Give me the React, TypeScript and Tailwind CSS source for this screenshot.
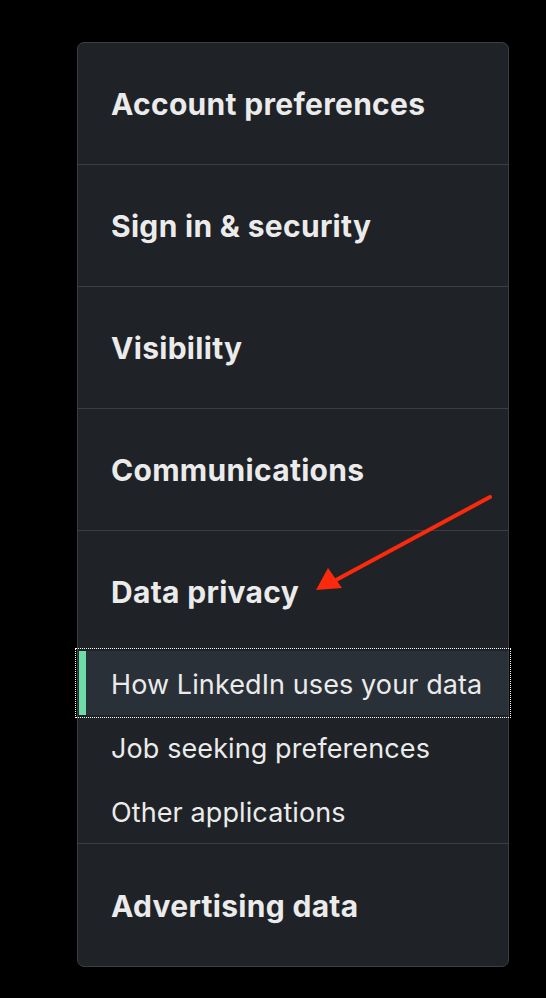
import React from "react"

const sections = [
  "Account preferences",
  "Sign in & security",
  "Visibility",
  "Communications",
]

const privacyItems = [
  { label: "How LinkedIn uses your data", active: true },
  { label: "Job seeking preferences", active: false },
  { label: "Other applications", active: false },
]

export default function App() {
  return (
    <div className="min-h-[998px] w-[546px] bg-black pt-[42px] pl-[77px] relative font-['Inter',sans-serif]">
      <div className="w-[432px] rounded-[7px] border border-[#3b3f44] bg-[#1f2226] text-[#ebebeb]">
        {sections.map((s) => (
          <div key={s} className="h-[122px] flex items-center pt-[2px] pl-[33px] border-b border-[#3b3f44]">
            <span className="text-[30px] font-bold tracking-[0.3px] whitespace-nowrap">{s}</span>
          </div>
        ))}

        {/* Data privacy */}
        <div className="border-b border-[#3b3f44]">
          <div className="h-[120px] flex items-center pt-[2px] pl-[33px]">
            <span className="text-[30px] font-bold tracking-[0.3px] whitespace-nowrap">Data privacy</span>
          </div>
          {privacyItems.map((item) => (
            <div
              key={item.label}
              className={
                item.active
                  ? "h-[64px] flex items-center relative bg-[#2a3038] outline outline-1 outline-dotted outline-white outline-offset-[2px] pt-[4px] pl-[33px]"
                  : "h-[64px] flex items-center pt-[4px] pl-[33px]"
              }
            >
              {item.active && <div className="absolute left-[1px] top-0 bottom-0 w-[7px] bg-[#6ddca9]" />}
              <span className="text-[27px] tracking-[0.1px] whitespace-nowrap">{item.label}</span>
            </div>
          ))}
        </div>

        <div className="h-[122px] flex items-center pt-[2px] pl-[33px]">
          <span className="text-[30px] font-bold tracking-[0.3px] whitespace-nowrap">Advertising data</span>
        </div>
      </div>

      {/* annotation arrow */}
      <svg className="absolute left-0 top-0" width="546" height="998" viewBox="0 0 546 998">
        <line x1="490" y1="497" x2="336" y2="580" stroke="#fb2a0c" strokeWidth="4" strokeLinecap="round" />
        <polygon points="316,590 328,568 342,588" fill="#fb2a0c" />
      </svg>
    </div>
  )
}
